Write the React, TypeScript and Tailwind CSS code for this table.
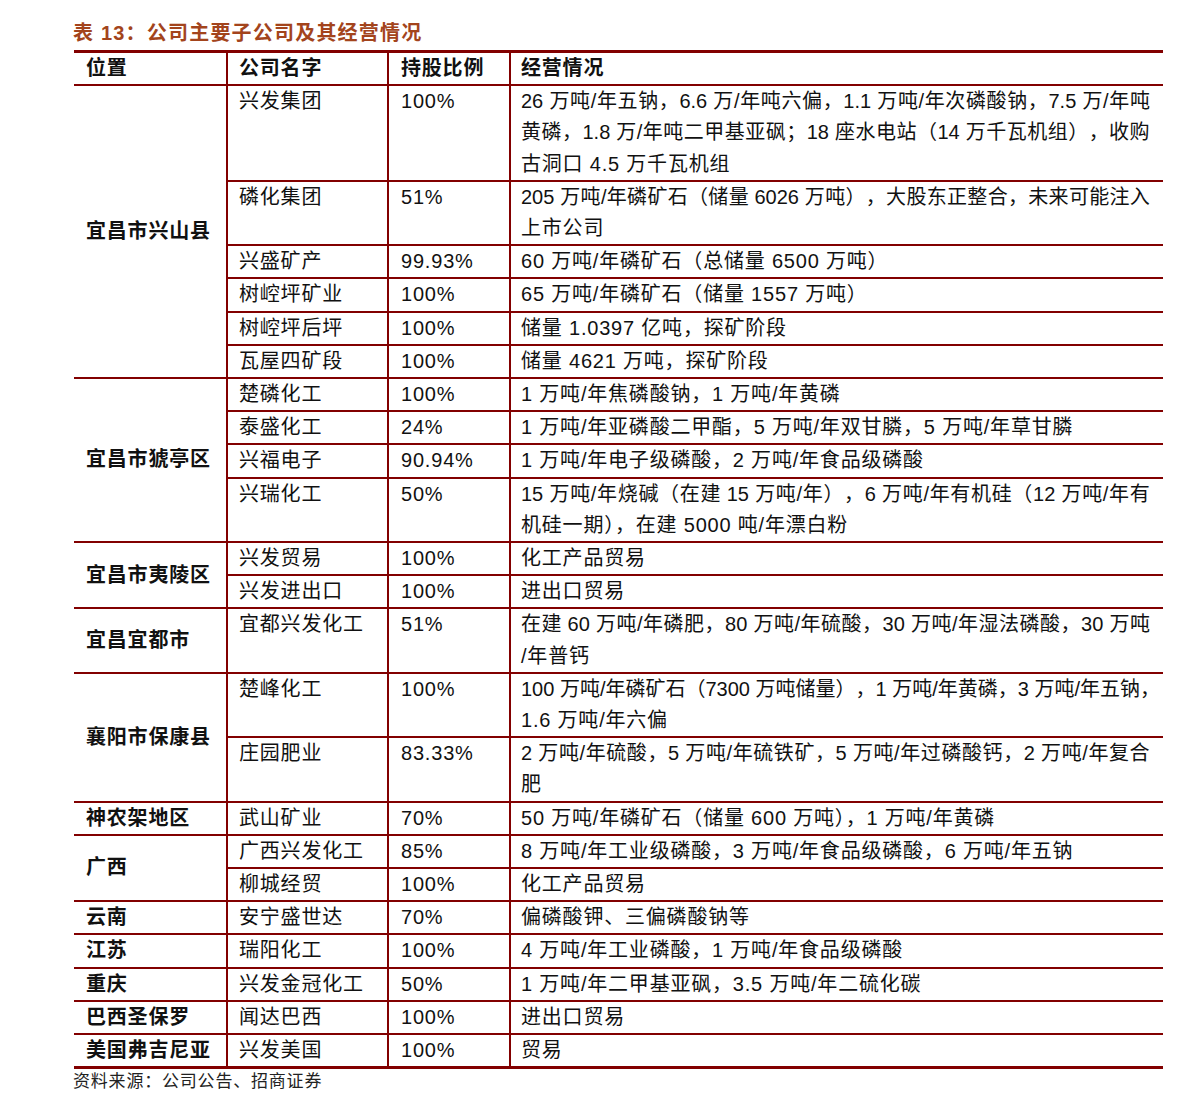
import React from "react";

type Line = { t: string; j?: boolean };
type Row = { name: string; pct: string; lines: Line[] };
type Group = { pos: string; rows: Row[] };

const L = (t: string, j = false): Line => ({ t, j });

const groups: Group[] = [
  {
    pos: "宜昌市兴山县",
    rows: [
      {
        name: "兴发集团",
        pct: "100%",
        lines: [
          L("26 万吨/年五钠，6.6 万/年吨六偏，1.1 万吨/年次磷酸钠，7.5 万/年吨", true),
          L("黄磷，1.8 万/年吨二甲基亚砜；18 座水电站（14 万千瓦机组），收购", true),
          L("古洞口 4.5 万千瓦机组"),
        ],
      },
      {
        name: "磷化集团",
        pct: "51%",
        lines: [
          L("205 万吨/年磷矿石（储量 6026 万吨），大股东正整合，未来可能注入", true),
          L("上市公司"),
        ],
      },
      { name: "兴盛矿产", pct: "99.93%", lines: [L("60 万吨/年磷矿石（总储量 6500 万吨）")] },
      { name: "树崆坪矿业", pct: "100%", lines: [L("65 万吨/年磷矿石（储量 1557 万吨）")] },
      { name: "树崆坪后坪", pct: "100%", lines: [L("储量 1.0397 亿吨，探矿阶段")] },
      { name: "瓦屋四矿段", pct: "100%", lines: [L("储量 4621 万吨，探矿阶段")] },
    ],
  },
  {
    pos: "宜昌市猇亭区",
    rows: [
      { name: "楚磷化工", pct: "100%", lines: [L("1 万吨/年焦磷酸钠，1 万吨/年黄磷")] },
      { name: "泰盛化工", pct: "24%", lines: [L("1 万吨/年亚磷酸二甲酯，5 万吨/年双甘膦，5 万吨/年草甘膦")] },
      { name: "兴福电子", pct: "90.94%", lines: [L("1 万吨/年电子级磷酸，2 万吨/年食品级磷酸")] },
      {
        name: "兴瑞化工",
        pct: "50%",
        lines: [
          L("15 万吨/年烧碱（在建 15 万吨/年），6 万吨/年有机硅（12 万吨/年有", true),
          L("机硅一期），在建 5000 吨/年漂白粉"),
        ],
      },
    ],
  },
  {
    pos: "宜昌市夷陵区",
    rows: [
      { name: "兴发贸易", pct: "100%", lines: [L("化工产品贸易")] },
      { name: "兴发进出口", pct: "100%", lines: [L("进出口贸易")] },
    ],
  },
  {
    pos: "宜昌宜都市",
    rows: [
      {
        name: "宜都兴发化工",
        pct: "51%",
        lines: [
          L("在建 60 万吨/年磷肥，80 万吨/年硫酸，30 万吨/年湿法磷酸，30 万吨", true),
          L("/年普钙"),
        ],
      },
    ],
  },
  {
    pos: "襄阳市保康县",
    rows: [
      {
        name: "楚峰化工",
        pct: "100%",
        lines: [
          L("100 万吨/年磷矿石（7300 万吨储量），1 万吨/年黄磷，3 万吨/年五钠，", true),
          L("1.6 万吨/年六偏"),
        ],
      },
      {
        name: "庄园肥业",
        pct: "83.33%",
        lines: [
          L("2 万吨/年硫酸，5 万吨/年硫铁矿，5 万吨/年过磷酸钙，2 万吨/年复合", true),
          L("肥"),
        ],
      },
    ],
  },
  {
    pos: "神农架地区",
    rows: [{ name: "武山矿业", pct: "70%", lines: [L("50 万吨/年磷矿石（储量 600 万吨），1 万吨/年黄磷")] }],
  },
  {
    pos: "广西",
    rows: [
      { name: "广西兴发化工", pct: "85%", lines: [L("8 万吨/年工业级磷酸，3 万吨/年食品级磷酸，6 万吨/年五钠")] },
      { name: "柳城经贸", pct: "100%", lines: [L("化工产品贸易")] },
    ],
  },
  { pos: "云南", rows: [{ name: "安宁盛世达", pct: "70%", lines: [L("偏磷酸钾、三偏磷酸钠等")] }] },
  { pos: "江苏", rows: [{ name: "瑞阳化工", pct: "100%", lines: [L("4 万吨/年工业磷酸，1 万吨/年食品级磷酸")] }] },
  { pos: "重庆", rows: [{ name: "兴发金冠化工", pct: "50%", lines: [L("1 万吨/年二甲基亚砜，3.5 万吨/年二硫化碳")] }] },
  { pos: "巴西圣保罗", rows: [{ name: "闻达巴西", pct: "100%", lines: [L("进出口贸易")] }] },
  { pos: "美国弗吉尼亚", rows: [{ name: "兴发美国", pct: "100%", lines: [L("贸易")] }] },
];

function tokens(s: string): string[] {
  return s.match(/[\u0000-\u00ff]+|./gu) || [];
}

function JLine({ t }: { t: string }) {
  return (
    <div className="flex justify-between whitespace-pre tracking-normal">
      {tokens(t).map((k, i) => (
        <span key={i}>{k}</span>
      ))}
    </div>
  );
}

const bc = "border-[#820000]";

export default function App() {
  return (
    <div
      className="bg-white text-[#111] pt-[18px] pl-[74px] w-[1191px] min-h-[1113px]"
      style={{ fontFamily: '"Liberation Sans", "Noto Sans CJK SC", sans-serif' }}
    >
      <div className="h-[30px] leading-[30px] text-[20px] font-bold text-[#a3441c] tracking-[1.2px] mb-[2px] -ml-[1px]">
        表 13：公司主要子公司及其经营情况
      </div>
      <table className="table-fixed border-collapse w-[1089px] text-[20px] leading-[31.2px] tracking-[0.8px]">
        <colgroup>
          <col className="w-[153px]" />
          <col className="w-[161px]" />
          <col className="w-[122px]" />
          <col className="w-[653px]" />
        </colgroup>
        <thead>
          <tr>
            <th className={`border-t-[3px] border-b-2 border-r-2 ${bc} text-left font-bold pl-[12px] py-0 align-top`}>
              位置
            </th>
            <th className={`border-t-[3px] border-b-2 border-r-2 ${bc} text-left font-bold pl-[11px] py-0 align-top`}>
              公司名字
            </th>
            <th className={`border-t-[3px] border-b-2 border-r-2 ${bc} text-left font-bold pl-[12px] py-0 align-top`}>
              持股比例
            </th>
            <th className={`border-t-[3px] border-b-2 ${bc} text-left font-bold pl-[10px] py-0 align-top`}>
              经营情况
            </th>
          </tr>
        </thead>
        <tbody>
          {groups.map((g, gi) =>
            g.rows.map((r, ri) => {
              const lastRow = gi === groups.length - 1 && ri === g.rows.length - 1;
              const bb = lastRow ? "border-b-[3px]" : "border-b-2";
              return (
                <tr key={`${gi}-${ri}`}>
                  {ri === 0 && (
                    <td
                      rowSpan={g.rows.length}
                      className={`${gi === groups.length - 1 ? "border-b-[3px]" : "border-b-2"} border-r-2 ${bc} font-bold pl-[12px] p-0 align-middle whitespace-nowrap`}
                    >
                      {g.pos}
                    </td>
                  )}
                  <td className={`${bb} border-r-2 ${bc} pl-[11px] align-top whitespace-nowrap`}>{r.name}</td>
                  <td className={`${bb} border-r-2 ${bc} pl-[12px] align-top whitespace-nowrap`}>{r.pct}</td>
                  <td className={`${bb} ${bc} pl-[10px] pr-[13px] align-top`}>
                    {r.lines.map((ln, li) =>
                      ln.j ? (
                        <JLine key={li} t={ln.t} />
                      ) : (
                        <div key={li} className="whitespace-nowrap">
                          {ln.t}
                        </div>
                      )
                    )}
                  </td>
                </tr>
              );
            })
          )}
        </tbody>
      </table>
      <div className="text-[17px] leading-[26px] text-[#222] tracking-[0.8px] -ml-[1px]">
        资料来源：公司公告、招商证券
      </div>
    </div>
  );
}
